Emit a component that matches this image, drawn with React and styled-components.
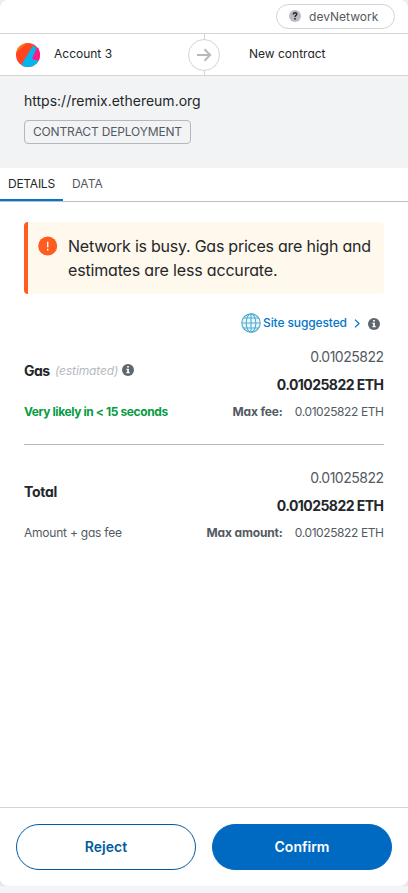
import React from "react";
import styled, { createGlobalStyle, css } from "styled-components";

const GlobalStyle = createGlobalStyle`
  *, *::before, *::after { box-sizing: border-box; }
  body {
    margin: 0;
    background: #f2f4f6;
    color: #24272a;
    font-family: Inter, "Liberation Sans", sans-serif;
    font-feature-settings: "cv11", "ss03";
    -webkit-font-smoothing: antialiased;
  }
  svg { display: block; flex: none; }
`;

const Label = styled.span`
  white-space: nowrap;
  letter-spacing: ${(p) => p.$track || 0}px;
  margin-right: ${(p) => -(p.$track || 0)}px;
`;

const Card = styled.main`
  display: flex;
  flex-direction: column;
  width: 408px;
  height: 886px;
  background: #fff;
  border-radius: 8px;
  box-shadow: 0 2px 8px rgba(0, 0, 0, 0.13);
`;

const NetworkBar = styled.header`
  display: flex;
  justify-content: flex-end;
  height: 34px;
  padding: 4px 13px 0 0;
  border-bottom: 1px solid #d2d4d8;
`;

const NetworkPill = styled.div`
  display: flex;
  align-items: center;
  width: 119px;
  height: 25px;
  padding: 0 0 1px 12px;
  gap: 8px;
  border: 1px solid #d2d4d8;
  border-radius: 13px;
  color: #535a61;
  font-size: 12px;
`;

const Parties = styled.section`
  display: grid;
  grid-template-columns: 188px 32px 1fr;
  align-items: center;
  height: 42px;
  border-bottom: 1px solid #d2d4d8;
  font-size: 12px;
`;

const Party = styled.div`
  display: flex;
  align-items: center;
  height: 41px;
  gap: 14px;
  padding-left: ${(p) => p.$inset}px;
`;

const PartyName = styled.div`
  padding-bottom: 2px;
`;

const ArrowColumn = styled.div`
  display: flex;
  align-items: center;
  justify-content: center;
  height: 41px;
  background: linear-gradient(#d2d4d8, #d2d4d8) 16px 0 / 1px 100% no-repeat;
`;

const ArrowCircle = styled.div`
  display: flex;
  align-items: center;
  justify-content: center;
  width: 32px;
  height: 32px;
  margin-top: 1px;
  border: 1px solid #d2d4d8;
  border-radius: 50%;
  background: #fff;
`;

const Origin = styled.section`
  display: flex;
  flex-direction: column;
  align-items: flex-start;
  height: 92px;
  padding: 15px 24px 0;
  background: #f2f3f5;
`;

const OriginUrl = styled.div`
  height: 20px;
  font-size: 14px;
  line-height: 20px;
`;

const ActionTag = styled.div`
  display: flex;
  align-items: center;
  width: 167px;
  height: 24px;
  margin-top: 9px;
  padding: 0 0 1px 8px;
  border: 1px solid #b3b8be;
  border-radius: 4px;
  color: #535a61;
  font-size: 12px;
`;

const Tabs = styled.nav`
  display: flex;
  height: 34px;
  border-bottom: 1px solid #bbc0c5;
`;

const Tab = styled.div`
  height: 33px;
  padding: 0 9px;
  font-size: 12px;
  line-height: 32px;
  color: #535a61;
  ${(p) =>
    p.$active &&
    css`
      width: 63px;
      padding: 0 8px;
      color: #24272a;
      border-bottom: 2px solid #0376c9;
    `}
`;

const Details = styled.section`
  display: flex;
  flex: 1;
  flex-direction: column;
  padding: 20px 24px 0;
`;

const Alert = styled.div`
  display: flex;
  height: 72px;
  padding: 12px 0 0 10px;
  gap: 10px;
  border-left: 4px solid #ff5c1f;
  border-radius: 4px;
  background: #fff8ed;
  font-size: 16px;
  line-height: 24px;
`;

const AlertIcon = styled.div`
  padding-top: 2px;
`;

const AlertLines = styled.div`
  display: flex;
  flex-direction: column;
`;

const Suggestion = styled.div`
  display: flex;
  align-items: center;
  justify-content: flex-end;
  height: 20px;
  margin-top: 19px;
  padding-right: 4px;
  color: #0376c9;
  font-size: 12px;
  font-weight: 500;
`;

const SuggestionText = styled.div`
  margin: 0 7px 0 2px;
  padding-bottom: 2px;
`;

const SuggestionInfo = styled.div`
  padding: 1px 0 0 8px;
`;

const FeeBlock = styled.div`
  display: grid;
  grid-template-columns: 1fr auto;
  grid-template-rows: 28px 28px 26px;
  height: 82px;
  margin-top: ${(p) => p.$gap}px;
  align-items: center;
`;

const FeeTitle = styled.div`
  display: flex;
  grid-row: 1 / 3;
  align-items: center;
  height: 20px;
  font-size: 14px;
  font-weight: 700;
`;

const Estimated = styled.em`
  margin: 1px 4px 0 5px;
  color: #b5babf;
  font-size: 12px;
  font-weight: 400;
`;

const FiatAmount = styled.div`
  justify-self: end;
  color: #535a61;
  font-size: 14px;
`;

const EthAmount = styled.div`
  justify-self: end;
  font-size: 14px;
  font-weight: 700;
`;

const FeeNote = styled.div`
  color: ${(p) => (p.$likely ? "#079c42" : "#535a61")};
  font-size: 12px;
  font-weight: ${(p) => (p.$likely ? 700 : 400)};
`;

const Maximum = styled.div`
  display: flex;
  justify-self: end;
  gap: 12px;
  color: #535a61;
  font-size: 12px;
  strong { font-weight: 700; }
`;

const Divider = styled.hr`
  width: 100%;
  height: 1px;
  margin: 20px 0 0;
  border: 0;
  background: #b5babf;
`;

const Footer = styled.footer`
  display: grid;
  grid-template-columns: 1fr 1fr;
  gap: 16px;
  height: 79px;
  padding: 16px 16px 0;
  border-top: 1px solid #d2d4d8;
`;

const Button = styled.button`
  height: 46px;
  padding: 0 0 2px;
  border: 1px solid ${(p) => (p.$primary ? "#0069c2" : "#045a9c")};
  border-radius: 23px;
  background: ${(p) => (p.$primary ? "#0069c2" : "#fff")};
  color: ${(p) => (p.$primary ? "#fff" : "#045a9c")};
  font-family: inherit;
  font-feature-settings: inherit;
  font-size: 14px;
  font-weight: 600;
`;

const Avatar = () => (
  <svg width="24" height="24" viewBox="0 0 24 24">
    <defs>
      <clipPath id="avatar"><circle cx="12" cy="12" r="12" /></clipPath>
    </defs>
    <g clipPath="url(#avatar)">
      <path fill="#ff4520" d="M0 0h24v24H0z" />
      <path fill="#fa7216" d="M0 10 12-1H0z" />
      <path fill="#ff178b" d="M20 5 24 4v14l-9-2z" />
      <path fill="#03b4ef" d="m17 2.5 3.7 2.5-4.7 11 8 2.3V24H4z" />
    </g>
  </svg>
);

const ArrowIcon = () => (
  <svg width="16" height="14" viewBox="0 0 16 14" fill="none" stroke="#b5babf" strokeWidth="2">
    <path d="M1 7h13M8.5 1.2 14.2 7l-5.7 5.8" />
  </svg>
);

const QuestionIcon = () => (
  <svg width="12" height="12" viewBox="0 0 12 12">
    <circle cx="6" cy="6" r="6" fill="#b9bdc2" />
    <path d="M4.2 4.5C4.3 3.3 5 2.8 6 2.8c1.1 0 1.8.6 1.8 1.5C7.8 5.4 6 5.5 6 7" fill="none" stroke="#24272a" strokeWidth="1.4" />
    <path fill="#24272a" d="M5.2 8h1.6v1.5H5.2z" />
  </svg>
);

const InfoIcon = () => (
  <svg width="12" height="12" viewBox="0 0 12 12">
    <circle cx="6" cy="6" r="6" fill="#5e666e" />
    <path fill="#fff" d="M5.1 2h1.8v1.6H5.1zM4.4 4.7h2.5v3.4h.8v1.2H4.4V8.1h.8V5.9h-.8z" />
  </svg>
);

const WarningIcon = () => (
  <svg width="20" height="20" viewBox="0 0 20 20">
    <circle cx="9.7" cy="10" r="9.5" fill="#ff5c1f" />
    <path d="M9.7 5.7v5.6M9.7 12.8v1.6" stroke="#fff" strokeWidth="1.4" />
  </svg>
);

const GlobeIcon = () => (
  <svg width="20" height="20" viewBox="0 0 20 20" fill="none" stroke="#55acd0" strokeWidth="1.15">
    <circle cx="10" cy="10" r="9.2" fill="#eaf9ff" />
    <ellipse cx="10" cy="10" rx="4.8" ry="9.2" />
    <path d="M10 1v18M1 10h18M2.7 5h14.6M2.7 15h14.6" />
  </svg>
);

const ChevronIcon = () => (
  <svg width="6" height="9" viewBox="0 0 6 9" fill="none" stroke="#0376c9" strokeWidth="1.3">
    <path d="m1 .6 4 3.9-4 3.9" />
  </svg>
);

export default function App() {
  return (
    <>
      <GlobalStyle />
      <Card>
        <NetworkBar>
          <NetworkPill>
            <QuestionIcon />
            <Label $track={0.03}>devNetwork</Label>
          </NetworkPill>
        </NetworkBar>
        <Parties>
          <Party $inset={16}>
            <Avatar />
            <PartyName><Label>Account 3</Label></PartyName>
          </Party>
          <ArrowColumn>
            <ArrowCircle><ArrowIcon /></ArrowCircle>
          </ArrowColumn>
          <Party $inset={29}>
            <PartyName><Label>New contract</Label></PartyName>
          </Party>
        </Parties>
        <Origin>
          <OriginUrl><Label>https://remix.ethereum.org</Label></OriginUrl>
          <ActionTag><Label $track={-0.16}>CONTRACT DEPLOYMENT</Label></ActionTag>
        </Origin>
        <Tabs>
          <Tab $active><Label $track={-0.25}>DETAILS</Label></Tab>
          <Tab><Label $track={0.1}>DATA</Label></Tab>
        </Tabs>
        <Details>
          <Alert>
            <AlertIcon><WarningIcon /></AlertIcon>
            <AlertLines>
              <Label $track={-0.24}>Network is busy. Gas prices are high and</Label>
              <Label $track={-0.17}>estimates are less accurate.</Label>
            </AlertLines>
          </Alert>
          <Suggestion>
            <GlobeIcon />
            <SuggestionText><Label $track={-0.12}>Site suggested</Label></SuggestionText>
            <ChevronIcon />
            <SuggestionInfo><InfoIcon /></SuggestionInfo>
          </Suggestion>
          <FeeBlock $gap={9}>
            <FeeTitle>
              <Label $track={-0.6}>Gas</Label>
              <Estimated><Label $track={-0.12}>(estimated)</Label></Estimated>
              <InfoIcon />
            </FeeTitle>
            <FiatAmount><Label $track={-0.5}>0.01025822</Label></FiatAmount>
            <EthAmount><Label $track={-0.54}>0.01025822 ETH</Label></EthAmount>
            <FeeNote $likely><Label $track={-0.4}>Very likely in &lt; 15 seconds</Label></FeeNote>
            <Maximum>
              <strong><Label $track={-0.15}>Max fee:</Label></strong>
              <Label $track={-0.4}>0.01025822 ETH</Label>
            </Maximum>
          </FeeBlock>
          <Divider />
          <FeeBlock $gap={18}>
            <FeeTitle><Label $track={-0.3}>Total</Label></FeeTitle>
            <FiatAmount><Label $track={-0.5}>0.01025822</Label></FiatAmount>
            <EthAmount><Label $track={-0.54}>0.01025822 ETH</Label></EthAmount>
            <FeeNote><Label $track={-0.22}>Amount + gas fee</Label></FeeNote>
            <Maximum>
              <strong><Label $track={-0.15}>Max amount:</Label></strong>
              <Label $track={-0.4}>0.01025822 ETH</Label>
            </Maximum>
          </FeeBlock>
        </Details>
        <Footer>
          <Button><Label>Reject</Label></Button>
          <Button $primary><Label>Confirm</Label></Button>
        </Footer>
      </Card>
    </>
  );
}
